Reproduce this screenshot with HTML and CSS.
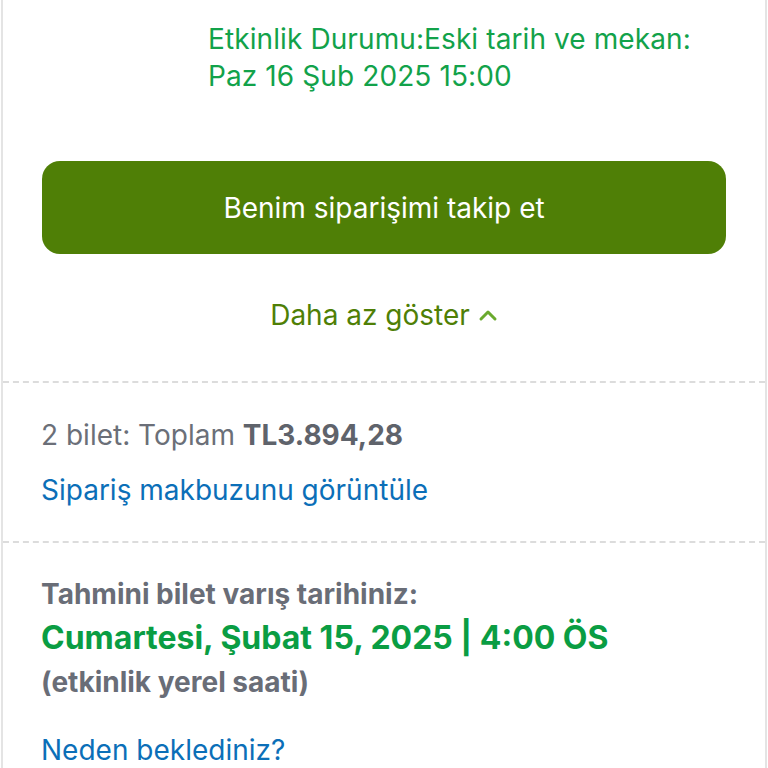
FILE: index.html
```html
<!DOCTYPE html>
<html lang="tr">
<head>
<meta charset="UTF-8">
<meta name="viewport" content="width=device-width, initial-scale=1.0">
<title>Sipariş</title>
<link rel="stylesheet" href="styles.css">
</head>
<body>
  <div class="card">
    <div class="status">
      <p>Etkinlik Durumu:Eski tarih ve mekan:</p>
      <p>Paz 16 Şub 2025 15:00</p>
    </div>

    <div class="actions">
      <button type="button" class="trackButton">Benim siparişimi takip et</button>
      <a class="lessLink" href="#">Daha az göster
        <svg width="20" height="14" viewBox="0 0 20 14" aria-hidden="true">
          <path d="M3 11 L10 4 L17 11" fill="none" stroke="#6aaa2e" stroke-width="3" stroke-linecap="round" stroke-linejoin="round"/>
        </svg>
      </a>
    </div>

    <div class="summary">
      <p class="total">2 bilet: Toplam <b>TL3.894,28</b></p>
      <a class="blueLink" href="#">Sipariş makbuzunu görüntüle</a>
    </div>

    <div class="delivery">
      <p class="label">Tahmini bilet varış tarihiniz:</p>
      <p class="date">Cumartesi, Şubat 15, 2025 | 4:00 ÖS</p>
      <p class="label">(etkinlik yerel saati)</p>
      <a class="blueLink why" href="#">Neden beklediniz?</a>
    </div>
  </div>
</body>
</html>
```

FILE: styles.css
```css
body {
  margin: 0;
  background-color: #ffffff;
  font-family: Inter, "Noto Sans", sans-serif;
}

p {
  margin: 0;
}

/* Card with grey side borders */
.card {
  border-left: 2px solid #e4e4e4;
  border-right: 2px solid #e4e4e4;
  margin: 0 1px;
  min-height: 768px;
}

.status {
  padding: 21px 0 0 205px;
  color: #12a24a;
  font-size: 28px;
  line-height: 37px;
  letter-spacing: 0.1px;
}

.actions {
  padding: 66px 39px 0;
  display: flex;
  flex-direction: column;
  align-items: center;
  border-bottom: 2px dashed #dcdcdc;
}

.trackButton {
  width: 100%;
  height: 93px;
  border: none;
  border-radius: 18px;
  background-color: #4f7f06;
  color: #ffffff;
  font-family: inherit;
  font-size: 28px;
  cursor: pointer;
}

.lessLink {
  display: flex;
  align-items: center;
  gap: 8px;
  margin: 44px 0 49px;
  color: #4f7f06;
  font-size: 28px;
  line-height: 34px;
  text-decoration: none;
}

.summary {
  padding: 35px 38px 34px;
  border-bottom: 2px dashed #dcdcdc;
}

.total {
  color: #6b6f78;
  font-size: 28px;
  line-height: 34px;
}

.total b {
  color: #5f636b;
}

.blueLink {
  display: inline-block;
  margin-top: 21px;
  color: #0b6fb8;
  font-size: 28px;
  line-height: 34px;
  text-decoration: none;
}

.delivery {
  padding: 29px 38px 0;
}

.label {
  color: #696d77;
  font-size: 28px;
  font-weight: 700;
  line-height: 44px;
}

.date {
  color: #0a9d43;
  font-size: 32px;
  font-weight: 700;
  line-height: 44px;
}

.why {
  margin-top: 29px;
}
```
